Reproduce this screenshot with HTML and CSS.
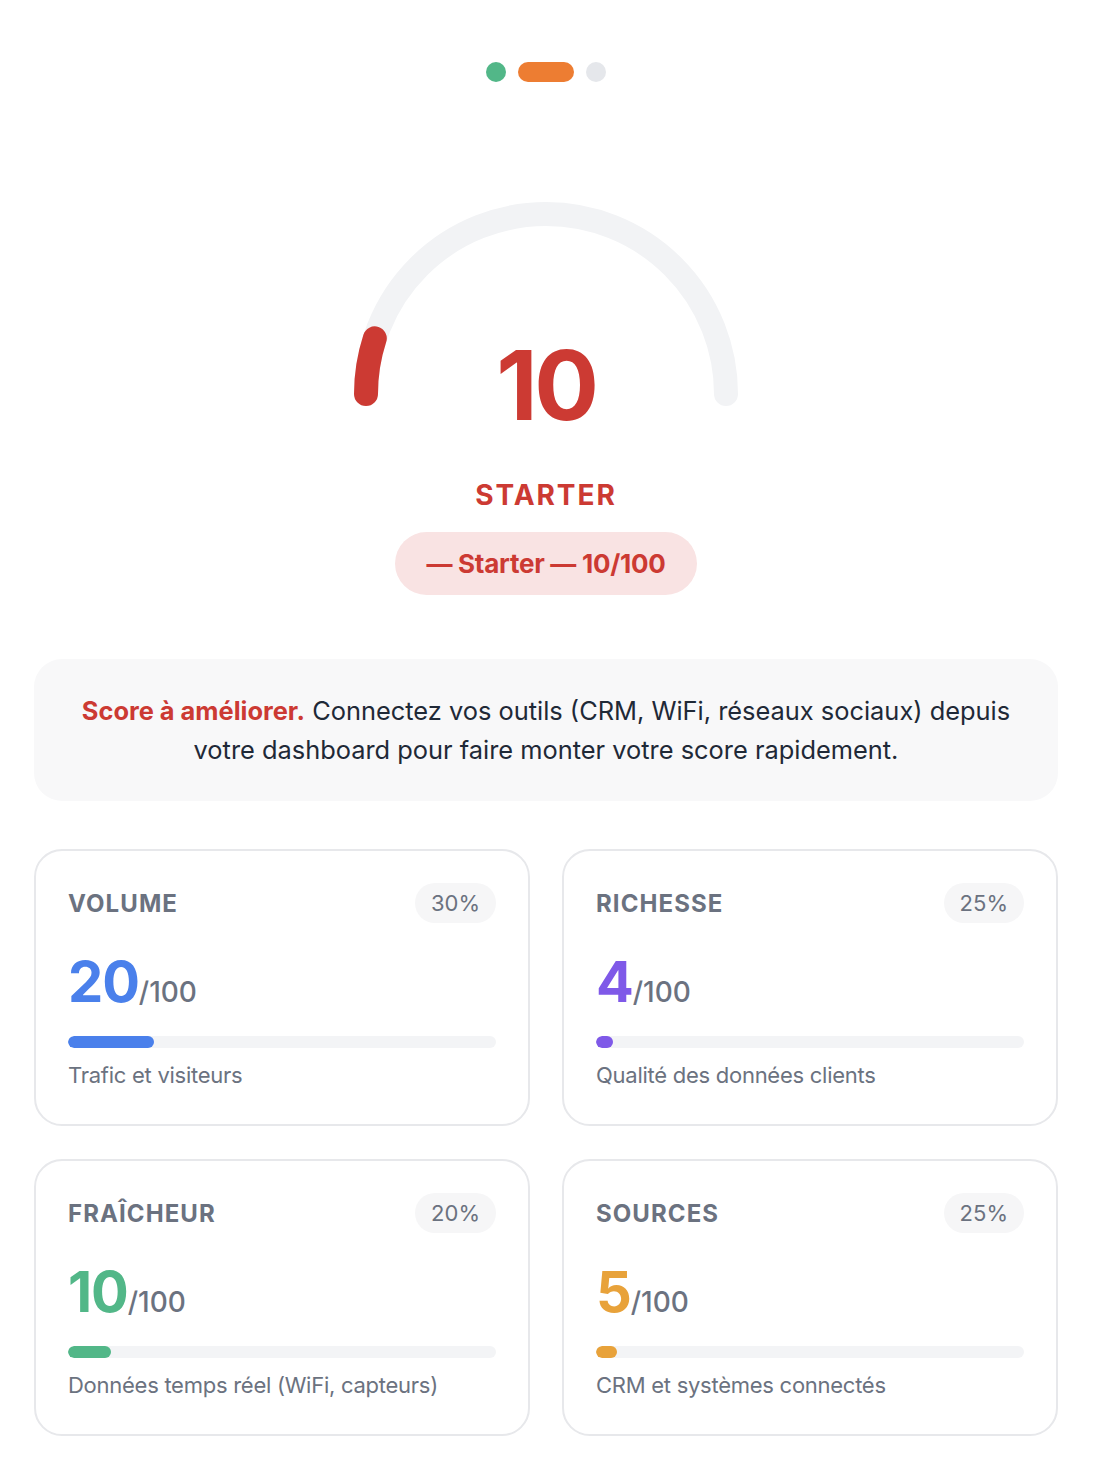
FILE: index.html
```html
<!DOCTYPE html>
<html lang="fr">
<head>
<meta charset="utf-8">
<title>Score</title>
<link rel="stylesheet" href="styles.css">
</head>
<body>
<main class="page">
  <div class="steps">
    <span class="step step-done"></span>
    <span class="step step-active"></span>
    <span class="step step-todo"></span>
  </div>

  <section class="gauge">
    <svg class="gauge-svg" width="384" height="206" viewBox="0 0 384 206" aria-hidden="true">
      <path d="M12 192 A180 180 0 0 1 372 192" fill="none" stroke="#f2f3f5" stroke-width="24" stroke-linecap="round"/>
      <path d="M12 192 A180 180 0 0 1 20.8 136.4" fill="none" stroke="#cc3a33" stroke-width="24" stroke-linecap="round"/>
    </svg>
    <div class="gauge-value">10</div>
  </section>

  <div class="level">STARTER</div>
  <div class="badge-row"><span class="badge">— Starter — 10/100</span></div>

  <div class="notice">
    <p><strong>Score à améliorer.</strong> Connectez vos outils (CRM, WiFi, réseaux sociaux) depuis votre dashboard pour faire monter votre score rapidement.</p>
  </div>

  <div class="cards">
    <article class="card">
      <div class="card-head"><span class="card-label">VOLUME</span><span class="card-weight">30%</span></div>
      <div class="card-score"><span class="score-num c-blue">20</span><span class="score-max">/100</span></div>
      <div class="bar"><div class="bar-fill bg-blue" style="width:20%"></div></div>
      <div class="card-desc">Trafic et visiteurs</div>
    </article>
    <article class="card">
      <div class="card-head"><span class="card-label">RICHESSE</span><span class="card-weight">25%</span></div>
      <div class="card-score"><span class="score-num c-purple">4</span><span class="score-max">/100</span></div>
      <div class="bar"><div class="bar-fill bg-purple" style="width:4%"></div></div>
      <div class="card-desc">Qualité des données clients</div>
    </article>
    <article class="card">
      <div class="card-head"><span class="card-label">FRAÎCHEUR</span><span class="card-weight">20%</span></div>
      <div class="card-score"><span class="score-num c-green">10</span><span class="score-max">/100</span></div>
      <div class="bar"><div class="bar-fill bg-green" style="width:10%"></div></div>
      <div class="card-desc">Données temps réel (WiFi, capteurs)</div>
    </article>
    <article class="card">
      <div class="card-head"><span class="card-label">SOURCES</span><span class="card-weight">25%</span></div>
      <div class="card-score"><span class="score-num c-amber">5</span><span class="score-max">/100</span></div>
      <div class="bar"><div class="bar-fill bg-amber" style="width:5%"></div></div>
      <div class="card-desc">CRM et systèmes connectés</div>
    </article>
  </div>
</main>
</body>
</html>
```
FILE: styles.css
```css
* { box-sizing: border-box; }
html, body { margin: 0; padding: 0; background: #ffffff; }
body {
  font-family: Inter, "Noto Sans", "Liberation Sans", sans-serif;
  color: #1f2937;
}
.page {
  width: 1024px;
  margin: 0 0 0 34px;
  padding: 62px 0 30px;
}

/* steps */
.steps {
  display: flex;
  justify-content: center;
  gap: 12px;
  height: 20px;
}
.step { display: block; height: 20px; width: 20px; border-radius: 10px; }
.step-done { background: #52b788; }
.step-active { width: 56px; background: #ed7d32; }
.step-todo { background: #e5e7eb; }

/* gauge */
.gauge {
  position: relative;
  width: 384px;
  height: 206px;
  margin: 120px auto 0;
}
.gauge-svg { display: block; }
.gauge-value {
  position: absolute;
  left: 0;
  right: 0;
  top: 135px;
  text-align: center;
  font-size: 96px;
  line-height: 1;
  font-weight: 700;
  letter-spacing: -0.035em;
  color: #cc3a33;
}

.level {
  margin-top: 70px;
  text-align: center;
  font-size: 28px;
  line-height: 34px;
  font-weight: 700;
  letter-spacing: 0.07em;
  color: #cc3a33;
}
.badge-row {
  margin-top: 20px;
  display: flex;
  justify-content: center;
}
.badge {
  display: block;
  height: 63px;
  line-height: 63px;
  padding: 0 31px;
  border-radius: 32px;
  background: #f9e3e3;
  color: #cc3a33;
  font-size: 26px;
  font-weight: 700;
  letter-spacing: -0.01em;
}

/* notice */
.notice {
  margin-top: 64px;
  background: #f8f8f9;
  border-radius: 28px;
  padding: 32px 40px;
  text-align: center;
}
.notice p {
  margin: 0;
  font-size: 25.4px;
  line-height: 39px;
  color: #1f2937;
}
.notice strong { color: #cc3a33; font-weight: 700; }

/* cards */
.cards {
  margin-top: 48px;
  display: grid;
  grid-template-columns: 1fr 1fr;
  gap: 33px 32px;
}
.card {
  border: 2px solid #e7e8eb;
  border-radius: 28px;
  padding: 32px;
  background: #fff;
}
.card-head {
  display: flex;
  justify-content: space-between;
  align-items: center;
  height: 40px;
}
.card-label {
  font-size: 24px;
  font-weight: 700;
  letter-spacing: 0.045em;
  color: #6b7280;
}
.card-weight {
  height: 40px;
  line-height: 40px;
  padding: 0 16px;
  border-radius: 20px;
  background: #f6f6f7;
  font-size: 22px;
  color: #6b7280;
}
.card-score {
  margin-top: 31px;
  display: flex;
  align-items: baseline;
  height: 56px;
  line-height: 1;
}
.score-num {
  font-size: 56px;
  font-weight: 700;
  letter-spacing: -0.02em;
}
.score-max {
  font-size: 28px;
  font-weight: 500;
  color: #6b7280;
}
.c-blue { color: #4a80eb; }
.c-purple { color: #7f59e8; }
.c-green { color: #52b788; }
.c-amber { color: #e8a23a; }
.bg-blue { background: #4a80eb; }
.bg-purple { background: #7f59e8; }
.bg-green { background: #52b788; }
.bg-amber { background: #e8a23a; }

.bar {
  margin-top: 26px;
  height: 12px;
  border-radius: 6px;
  background: #f3f4f6;
  overflow: hidden;
}
.bar-fill { height: 100%; border-radius: 6px; }
.card-desc {
  margin-top: 11px;
  font-size: 22px;
  line-height: 33px;
  letter-spacing: -0.012em;
  color: #6b7280;
}
```
